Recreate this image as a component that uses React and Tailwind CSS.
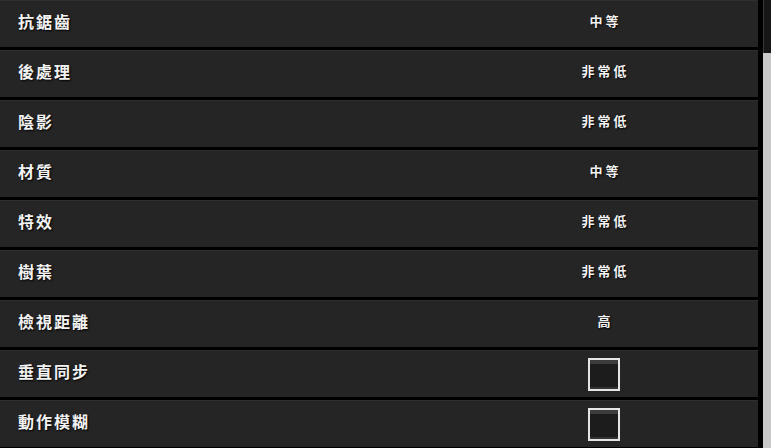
import React from "react";

const rows = [
  { label: "抗鋸齒", value: "中等" },
  { label: "後處理", value: "非常低" },
  { label: "陰影", value: "非常低" },
  { label: "材質", value: "中等" },
  { label: "特效", value: "非常低" },
  { label: "樹葉", value: "非常低" },
  { label: "檢視距離", value: "高" },
  { label: "垂直同步", check: true },
  { label: "動作模糊", check: true },
];

const font = { fontFamily: '"Noto Sans CJK TC", "Noto Sans CJK SC", sans-serif' };

export default function App() {
  return (
    <div className="w-[771px] h-[448px] overflow-hidden bg-black flex" style={font}>
      <div className="w-[758px] flex flex-col gap-[3px] shrink-0">
        {rows.map((r, i) => (
          <div
            key={i}
            className="h-[47px] shrink-0 bg-[#252525] border-t border-[#2f2f2f] grid grid-cols-[490px_228px_1fr] items-center"
          >
            <div className="pl-[18px] pb-[6px] text-[16px] font-bold text-[#f2f2f2] tracking-[2px] [text-shadow:1px_1px_2px_#000]">
              {r.label}
            </div>
            <div className="flex justify-center">
              {r.check ? (
                <div className="w-[32px] h-[33px] border-2 border-[#e6e6e6] bg-[#1c1c1c] flex flex-col justify-between">
                  <div className="h-[4px] bg-[#3c3c3c]" />
                  <div className="h-[2px] bg-[#333]" />
                </div>
              ) : (
                <span className="pb-[6px] text-[13px] font-bold text-[#f2f2f2] tracking-[3px] pl-[3px] [text-shadow:1px_1px_2px_#000]">
                  {r.value}
                </span>
              )}
            </div>
            <div />
          </div>
        ))}
      </div>
      <div className="w-[5px] shrink-0 bg-black" />
      <div className="w-[8px] shrink-0 flex flex-col">
        <div className="h-[53px] bg-[#161616] border-l border-[#3a3a3a]" />
        <div className="flex-1 bg-[#c9c9c9]" />
      </div>
    </div>
  );
}
